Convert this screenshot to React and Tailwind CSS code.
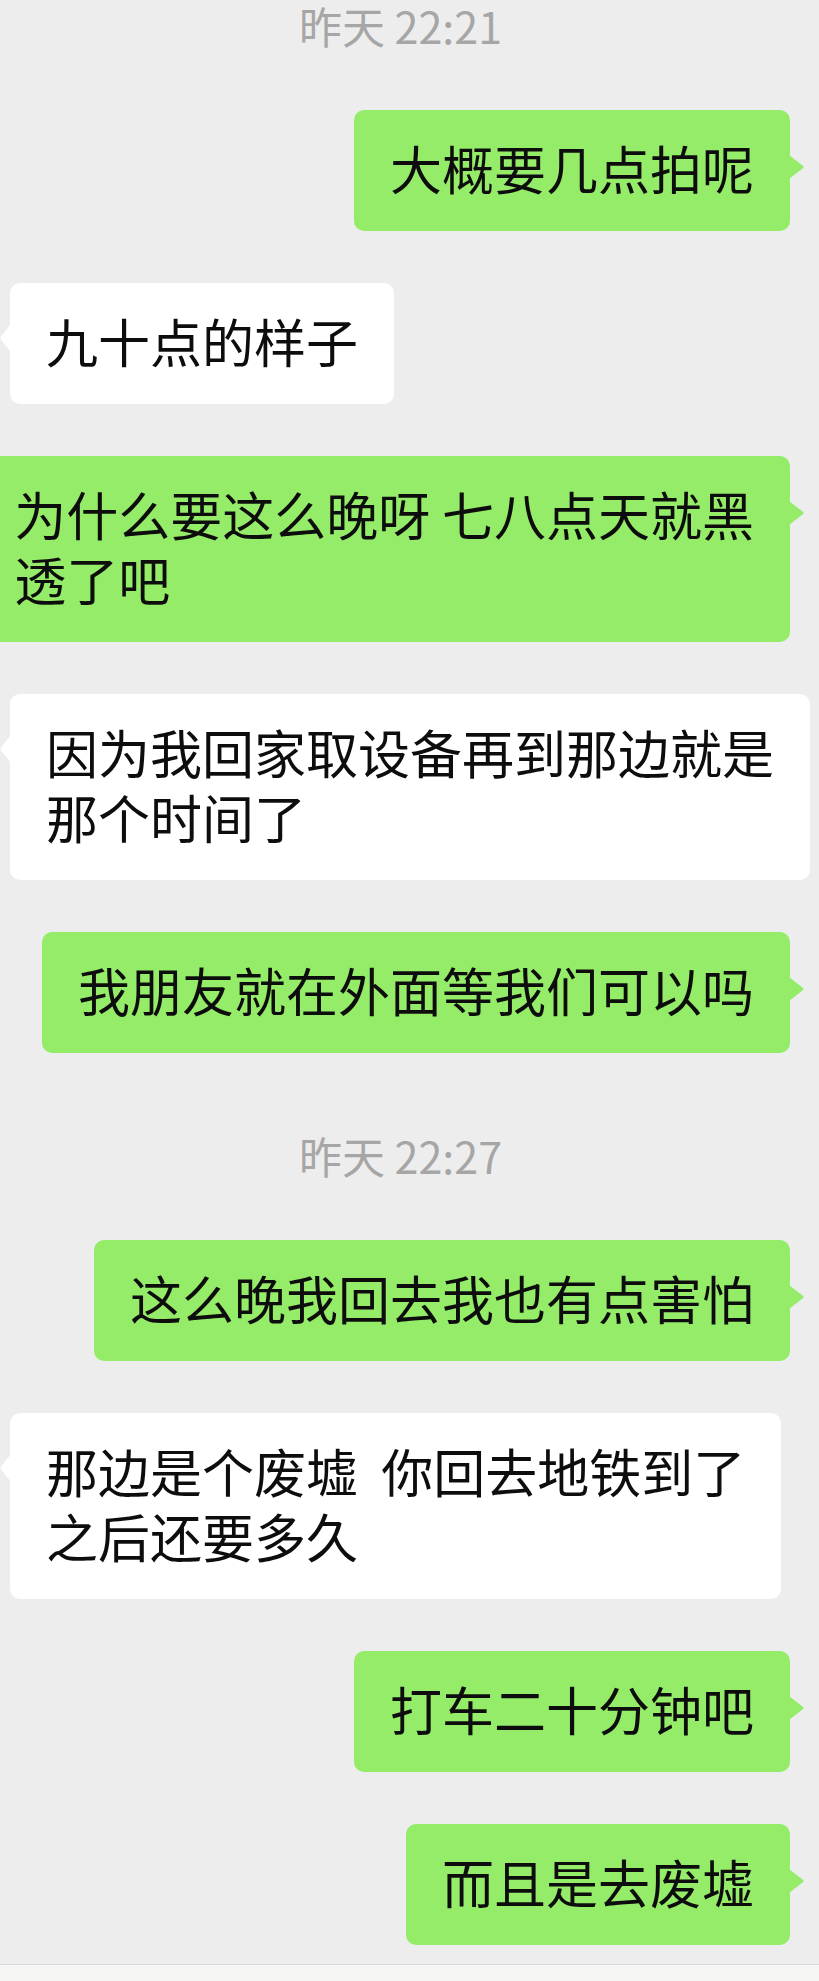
import React from 'react'

const font = { fontFamily: '"Noto Sans CJK SC", "Noto Sans", sans-serif' }

const messages = [
  { type: 'time', text: '昨天 22:21', first: true },
  { type: 'me', lines: ['大概要几点拍呢'] },
  { type: 'them', lines: ['九十点的样子'] },
  { type: 'me', lines: ['为什么要这么晚呀 七八点天就黑', '透了吧'] },
  { type: 'them', lines: ['因为我回家取设备再到那边就是', '那个时间了'] },
  { type: 'me', lines: ['我朋友就在外面等我们可以吗'] },
  { type: 'time', text: '昨天 22:27' },
  { type: 'me', lines: ['这么晚我回去我也有点害怕'] },
  { type: 'them', lines: ['那边是个废墟  你回去地铁到了', '之后还要多久'] },
  { type: 'me', lines: ['打车二十分钟吧'] },
  { type: 'me', lines: ['而且是去废墟'] },
]

const TimeStamp = ({ text, first }) => (
  <div className={`${first ? 'mt-0' : 'mt-[25px]'} mb-[8px] h-[50px] pr-[18px] flex items-center justify-center text-[43px] leading-[50px] text-[#a6a6a6]`}>
    {text}
  </div>
)

const Bubble = ({ mine, lines }) => {
  return (
    <div className={`flex ${mine ? 'justify-end pr-[29px]' : 'justify-start pl-[10px]'}`}>
      <div
        className={`relative shrink-0 rounded-[10px] px-[36px] pt-[25px] pb-[31px] text-[52px] leading-[65px] text-[#0d0d0d] whitespace-pre ${
          mine ? 'bg-[#95ec69]' : 'bg-white'
        }`}
      >
        {lines.map((l, i) => (
          <div key={i}>{l}</div>
        ))}
        {/* tail */}
        {mine ? (
          <svg className="absolute top-[45px] right-[-15px]" width="16" height="24" viewBox="0 0 16 24">
            <path d="M0 0 L13.5 10.5 Q15.5 12 13.5 13.5 L0 24 Z" fill="#95ec69" />
          </svg>
        ) : (
          <svg className="absolute top-[41px] left-[-10px]" width="11" height="28" viewBox="0 0 11 28">
            <path d="M11 0 L1 12.5 Q0 14 1 15.5 L11 28 Z" fill="#ffffff" />
          </svg>
        )}
      </div>
    </div>
  )
}

export default function App() {
  return (
    <div className="h-[1981px] w-full overflow-hidden bg-[#ededed] flex flex-col" style={font}>
      <div className="flex flex-col gap-[52px]">
        {messages.map((m, i) =>
          m.type === 'time' ? (
            <TimeStamp key={i} text={m.text} first={m.first} />
          ) : (
            <Bubble key={i} mine={m.type === 'me'} lines={m.lines} />
          )
        )}
      </div>

      {/* input bar edge */}
      <div className="mt-auto h-[17px] border-t border-[#d8d8d8] bg-[#f5f6f3]"></div>
    </div>
  )
}
